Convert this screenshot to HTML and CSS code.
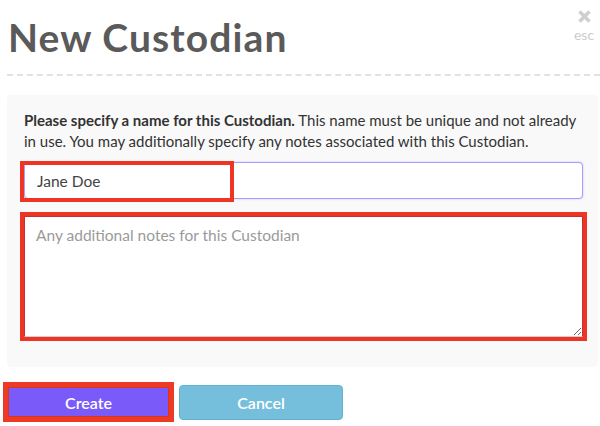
FILE: index.html
```html
<!DOCTYPE html>
<html>
<head>
<meta charset="utf-8">
<link rel="stylesheet" href="styles.css">
</head>
<body>
<div class="modal">
  <div class="modal-header">
    <h1 class="title">New Custodian</h1>
    <div class="close">
      <svg class="close-x" width="13" height="13" viewBox="0 0 13 13"><path d="M1.5 1.5 L11.5 11.5 M11.5 1.5 L1.5 11.5" stroke="#cfcfcf" stroke-width="3.6" fill="none"/></svg>
      <span class="esc">esc</span>
    </div>
  </div>
  <div class="panel">
    <p class="intro"><strong>Please specify a name for this Custodian.</strong> This name must be unique and not already in use. You may additionally specify any notes associated with this Custodian.</p>
    <div class="name-field">
      <input class="name-input" type="text" value="Jane Doe">
      <div class="mark mark-name"></div>
    </div>
    <div class="notes-wrap">
      <textarea class="notes" placeholder="Any additional notes for this Custodian"></textarea>
    </div>
  </div>
  <div class="actions">
    <button class="btn btn-create">Create</button>
    <button class="btn btn-cancel">Cancel</button>
  </div>
</div>
</body>
</html>
```
FILE: styles.css
```css
html, body {
  margin: 0;
  padding: 0;
  background: #fff;
}
body {
  font-family: Lato, "Open Sans", "Liberation Sans", sans-serif;
  color: #333;
}
.modal {
  padding: 0 2px 0 7px;
}
.modal-header {
  display: flex;
  justify-content: space-between;
  align-items: flex-start;
  height: 74px;
  border-bottom: 2px dashed #e2e2e2;
  margin-right: -2px;
}
.title {
  margin: 13px 0 0 1px;
  font-size: 39px;
  line-height: 48px;
  font-weight: 700;
  color: #5a5a5a;
  letter-spacing: 1.1px;
}
.close {
  display: flex;
  flex-direction: column;
  align-items: center;
  margin: 10px 4px 0 0;
  width: 24px;
}
.close-x {
  display: block;
}
.esc {
  font-size: 14px;
  line-height: 16px;
  color: #cccccc;
  margin-top: 4px;
}
.panel {
  margin-top: 19px;
  background: #f9f9f9;
  border-radius: 4px;
  padding: 15px 15px 26px 17px;
}
.intro {
  margin: 0;
  font-size: 15px;
  line-height: 21px;
  color: #333;
}
.intro strong {
  font-weight: 700;
}
.name-field {
  position: relative;
  margin-top: 10px;
}
.name-input {
  display: block;
  box-sizing: border-box;
  width: 100%;
  height: 37px;
  border: 1px solid #a99cfb;
  border-radius: 4px;
  box-shadow: 0 0 2px #c4bbff;
  padding: 0 12px;
  font-family: Lato, "Open Sans", sans-serif;
  font-size: 15.5px;
  color: #444;
  background: #fff;
  outline: none;
}
.mark {
  position: absolute;
  border: 4px solid #ee3424;
  box-sizing: border-box;
}
.mark-name {
  left: -4px;
  top: -1px;
  width: 214px;
  height: 41px;
}
.notes-wrap {
  margin: 13px -4px 0 -4px;
  border: 4px solid #ee3424;
}
.notes {
  display: block;
  box-sizing: border-box;
  width: 100%;
  height: 121px;
  margin: 0;
  border: 1px solid #c9302c;
  border-bottom-color: #cfcfcf;
  padding: 9px 11px;
  font-family: Lato, "Open Sans", sans-serif;
  font-size: 15.5px;
  color: #444;
  background: #fff;
  resize: vertical;
  outline: none;
}
.notes::placeholder {
  color: #9a9a9a;
}
.actions {
  display: flex;
  align-items: center;
  gap: 5px;
  margin: 15px 0 0 -4px;
}
.btn {
  font-family: Lato, "Open Sans", sans-serif;
  font-size: 16px;
  font-weight: 600;
  color: #fff;
  cursor: pointer;
  box-sizing: border-box;
  padding: 0;
}
.btn-create {
  width: 171px;
  height: 40px;
  background: #7a5af8;
  border: 5px solid #ee3a24;
  box-shadow: inset 0 0 0 1px #d6351f;
}
.btn-cancel {
  width: 164px;
  height: 35px;
  background: #76bfdc;
  border: 1px solid #62b1d3;
  border-radius: 4px;
}
```
